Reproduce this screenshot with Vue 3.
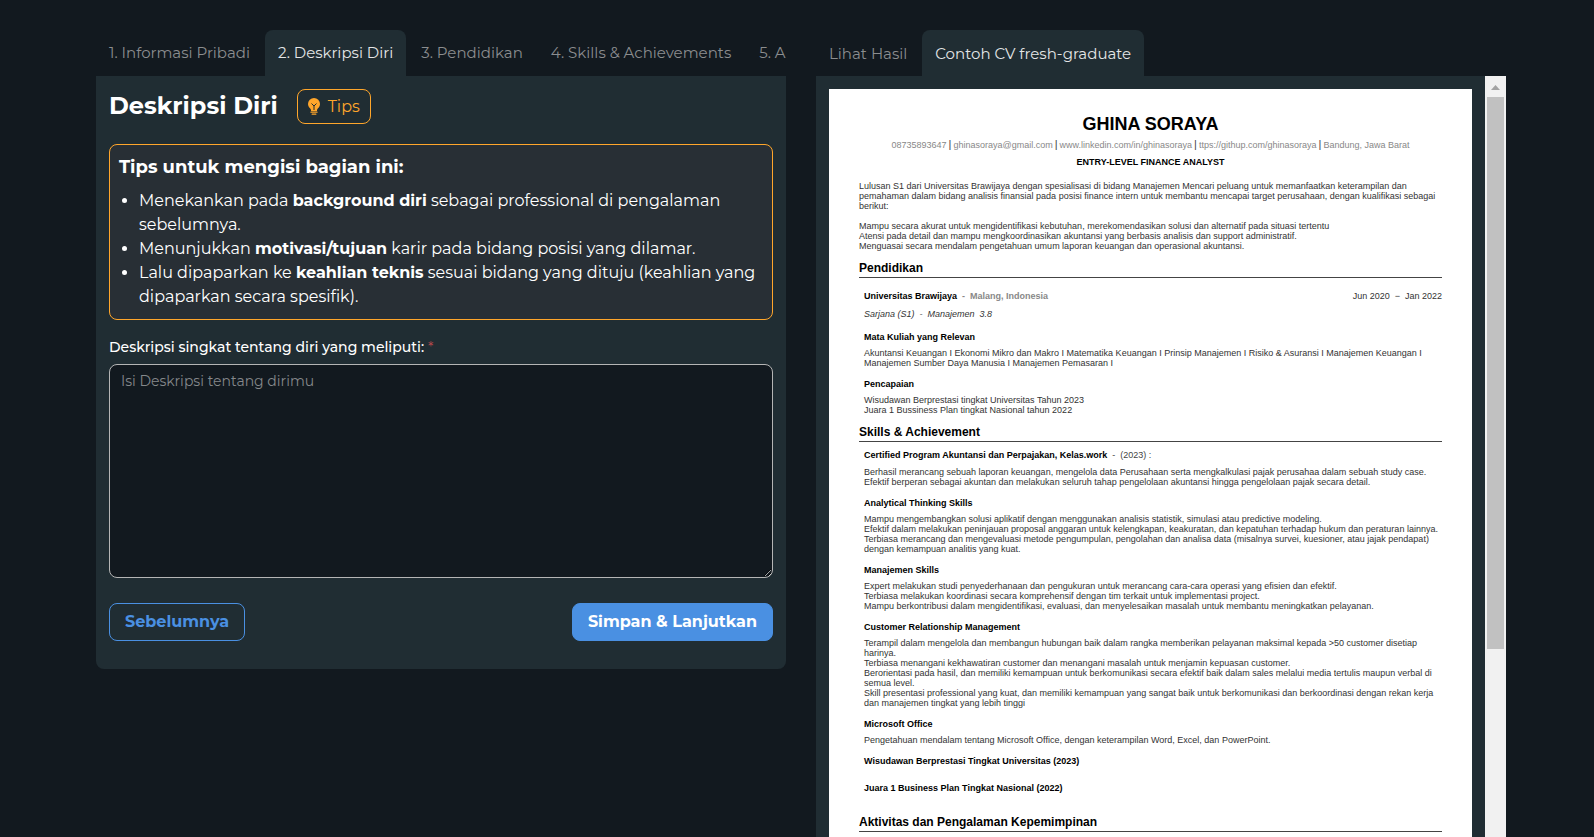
<script setup>
import { ref } from 'vue'

const description = ref('')

const steps = ['1. Informasi Pribadi', '2. Deskripsi Diri', '3. Pendidikan', '4. Skills & Achievements', '5. A']
const activeStep = ref(1)

const previews = ['Lihat Hasil', 'Contoh CV fresh-graduate']
const activePreview = ref(1)

const contacts = [
  '08735893647',
  'ghinasoraya@gmail.com',
  'www.linkedin.com/in/ghinasoraya',
  'ttps://githup.com/ghinasoraya',
  'Bandung, Jawa Barat',
]

const summary = [
  'Lulusan S1 dari Universitas Brawijaya dengan spesialisasi di bidang Manajemen Mencari peluang untuk memanfaatkan keterampilan dan',
  'pemahaman dalam bidang analisis finansial pada posisi finance intern untuk membantu mencapai target perusahaan, dengan kualifikasi sebagai',
  'berikut:',
]

const highlights = [
  'Mampu secara akurat untuk mengidentifikasi kebutuhan, merekomendasikan solusi dan alternatif pada situasi tertentu',
  'Atensi pada detail dan mampu mengkoordinasikan akuntansi yang berbasis analisis dan support administratif.',
  'Menguasai secara mendalam pengetahuan umum laporan keuangan dan operasional akuntansi.',
]

const education = [
  {
    title: 'Mata Kuliah yang Relevan',
    lines: [
      'Akuntansi Keuangan I Ekonomi Mikro dan Makro I Matematika Keuangan I Prinsip Manajemen I Risiko & Asuransi I Manajemen Keuangan I',
      'Manajemen Sumber Daya Manusia I Manajemen Pemasaran I',
    ],
  },
  {
    title: 'Pencapaian',
    lines: ['Wisudawan Berprestasi tingkat Universitas Tahun 2023', 'Juara 1 Bussiness Plan tingkat Nasional tahun 2022'],
  },
]

const skills = [
  {
    title: 'Certified Program Akuntansi dan Perpajakan, Kelas.work',
    note: '(2023) :',
    lines: [
      'Berhasil merancang sebuah laporan keuangan, mengelola data Perusahaan serta mengkalkulasi pajak perusahaa dalam sebuah study case.',
      'Efektif berperan sebagai akuntan dan melakukan seluruh tahap pengelolaan akuntansi hingga pengelolaan pajak secara detail.',
    ],
  },
  {
    title: 'Analytical Thinking Skills',
    lines: [
      'Mampu mengembangkan solusi aplikatif dengan menggunakan analisis statistik, simulasi atau predictive modeling.',
      'Efektif dalam melakukan peninjauan proposal anggaran untuk kelengkapan, keakuratan, dan kepatuhan terhadap hukum dan peraturan lainnya.',
      'Terbiasa merancang dan mengevaluasi metode pengumpulan, pengolahan dan analisa data (misalnya survei, kuesioner, atau jajak pendapat)',
      'dengan kemampuan analitis yang kuat.',
    ],
  },
  {
    title: 'Manajemen Skills',
    lines: [
      'Expert melakukan studi penyederhanaan dan pengukuran untuk merancang cara-cara operasi yang efisien dan efektif.',
      'Terbiasa melakukan koordinasi secara komprehensif dengan tim terkait untuk implementasi project.',
      'Mampu berkontribusi dalam mengidentifikasi, evaluasi, dan menyelesaikan masalah untuk membantu meningkatkan pelayanan.',
    ],
  },
  {
    title: 'Customer Relationship Management',
    lines: [
      'Terampil dalam mengelola dan membangun hubungan baik dalam rangka memberikan pelayanan maksimal kepada >50 customer disetiap',
      'harinya.',
      'Terbiasa menangani kekhawatiran customer dan menangani masalah untuk menjamin kepuasan customer.',
      'Berorientasi pada hasil, dan memiliki kemampuan untuk berkomunikasi secara efektif baik dalam sales melalui media tertulis maupun verbal di',
      'semua level.',
      'Skill presentasi professional yang kuat, dan memiliki kemampuan yang sangat baik untuk berkomunikasi dan berkoordinasi dengan rekan kerja',
      'dan manajemen tingkat yang lebih tinggi',
    ],
  },
  {
    title: 'Microsoft Office',
    lines: ['Pengetahuan mendalam tentang Microsoft Office, dengan keterampilan Word, Excel, dan PowerPoint.'],
  },
  { title: 'Wisudawan Berprestasi Tingkat Universitas (2023)', lines: [] },
  { title: 'Juara 1 Business Plan Tingkat Nasional (2022)', lines: [] },
]
</script>

<template>
  <main class="page">
    <section class="column">
      <nav class="tabs">
        <button
          v-for="(step, i) in steps"
          :key="step"
          type="button"
          class="tab"
          :class="{ active: i === activeStep }"
          @click="activeStep = i"
        >{{ step }}</button>
      </nav>

      <form class="panel form" @submit.prevent>
        <header class="form-head">
          <h1>Deskripsi Diri</h1>
          <button type="button" class="tips-button">
            <svg class="bulb" viewBox="0 0 12 17" aria-hidden="true">
              <path class="glass" d="M6 0a6 6 0 0 0-6 6c0 2 1 3.300 2 4.300.7.700 1 1.300 1 2V13h6v-.700c0-.700.3-1.300 1-2 1-1 2-2.300 2-4.300a6 6 0 0 0-6-6z" />
              <path class="filament" d="M3.500 5.500 6 8l2.500-2.500M6 8v4" />
              <path class="cap" d="M3 14.200h6M4.200 16.200h3.600" />
            </svg>
            Tips
          </button>
        </header>

        <aside class="tips">
          <h2>Tips untuk mengisi bagian ini:</h2>
          <ul>
            <li>Menekankan pada <b>background diri</b> sebagai professional di pengalaman<br />sebelumnya.</li>
            <li>Menunjukkan <b>motivasi/tujuan</b> karir pada bidang posisi yang dilamar.</li>
            <li>Lalu dipaparkan ke <b>keahlian teknis</b> sesuai bidang yang dituju (keahlian yang<br />dipaparkan secara spesifik).</li>
          </ul>
        </aside>

        <label for="description">Deskripsi singkat tentang diri yang meliputi: <span class="required">*</span></label>
        <textarea id="description" v-model="description" placeholder="Isi Deskripsi tentang dirimu"></textarea>

        <footer class="actions">
          <button type="button" class="action outline">Sebelumnya</button>
          <button type="submit" class="action solid">Simpan &amp; Lanjutkan</button>
        </footer>
      </form>
    </section>

    <section class="column">
      <nav class="tabs preview-tabs">
        <button
          v-for="(preview, i) in previews"
          :key="preview"
          type="button"
          class="tab"
          :class="{ active: i === activePreview }"
          @click="activePreview = i"
        >{{ preview }}</button>
      </nav>

      <div class="viewer">
        <div class="viewer-body">
          <article class="paper">
            <h2 class="name">GHINA SORAYA</h2>
            <p class="contacts"><template v-for="(contact, i) in contacts" :key="contact"><span v-if="i" class="bar">|</span>{{ contact }}</template></p>
            <p class="role">ENTRY-LEVEL FINANCE ANALYST</p>

            <p class="summary"><span v-for="line in summary" :key="line" class="line">{{ line }}</span></p>
            <p class="highlights"><span v-for="line in highlights" :key="line" class="line">{{ line }}</span></p>

            <section class="block education">
              <h3>Pendidikan</h3>
              <div class="school">
                <p class="entry-title">Universitas Brawijaya <span class="place">&nbsp;- &nbsp;<b>Malang, Indonesia</b></span></p>
                <p class="date">Jun 2020 &nbsp;− &nbsp;Jan 2022</p>
              </div>
              <p class="degree">Sarjana (S1) &nbsp;- &nbsp;Manajemen &nbsp;3.8</p>
              <div v-for="entry in education" :key="entry.title" class="entry">
                <h4 class="entry-title">{{ entry.title }}</h4>
                <p><span v-for="line in entry.lines" :key="line" class="line">{{ line }}</span></p>
              </div>
            </section>

            <section class="block skills">
              <h3>Skills &amp; Achievement</h3>
              <div v-for="entry in skills" :key="entry.title" class="entry">
                <h4 class="entry-title">{{ entry.title }} <span v-if="entry.note" class="note">&nbsp;- &nbsp;{{ entry.note }}</span></h4>
                <p><span v-for="line in entry.lines" :key="line" class="line">{{ line }}</span></p>
              </div>
            </section>

            <section class="block">
              <h3>Aktivitas dan Pengalaman Kepemimpinan</h3>
            </section>
          </article>
        </div>
        <div class="scrollbar" aria-hidden="true">
          <svg class="arrow" viewBox="0 0 21 21"><path d="M6 14l4.500-5 4.500 5z" /></svg>
          <div class="thumb"></div>
        </div>
      </div>
    </section>
  </main>
</template>

<style>
body {
  background: #12191f;
}
</style>

<style scoped>
* {
  box-sizing: border-box;
}

h1, h2, h3, h4, p, ul {
  margin: 0;
}

.page {
  display: grid;
  grid-template-columns: minmax(0, 1fr) minmax(0, 1fr);
  gap: 30px;
  height: 100vh;
  padding: 30px 88px 0 96px;
  overflow: hidden;
  background: #12191f;
  color: #fff;
  font-family: Montserrat, Inter, sans-serif;
  font-size: 16px;
  line-height: 24px;
}

button, textarea {
  font: inherit;
}

.column {
  display: flex;
  flex-direction: column;
  min-height: 0;
}

.tabs {
  display: flex;
  flex: none;
  gap: 2px;
  overflow: hidden;
}

.tab {
  flex: none;
  height: 46px;
  padding: 0 13px;
  border: 0;
  border-radius: 8px 8px 0 0;
  background: none;
  color: #8b8d8f;
  font-size: 15px;
  white-space: nowrap;
}

.preview-tabs .tab {
  padding-top: 2px;
}

.tab.active {
  background: #202d33;
  color: #e4e6e7;
}

.panel {
  background: #202d33;
  border-radius: 0 0 8px 8px;
}

.form {
  display: flex;
  flex-direction: column;
  padding: 13px 13px 28px;
}

.form-head {
  display: flex;
  align-items: flex-start;
  gap: 19px;
}

h1 {
  font-size: 24px;
  line-height: 33px;
}

.tips-button {
  display: flex;
  align-items: center;
  gap: 8px;
  height: 35px;
  padding: 0 10px;
  border: 1px solid #ffa62b;
  border-radius: 8px;
  background: none;
  color: #ffa62b;
}

.bulb {
  width: 12px;
  height: 17px;
}

.glass {
  fill: #ffa62b;
}

.filament {
  fill: none;
  stroke: #202d33;
}

.cap {
  fill: none;
  stroke: #ffa62b;
  stroke-width: 1.3;
  stroke-linecap: round;
}

.tips {
  margin-top: 20px;
  padding: 10px 9px;
  border: 1px solid #ffa62b;
  border-radius: 8px;
  background: #282f35;
}

.tips h2 {
  font-size: 18px;
  line-height: 24px;
}

.tips ul {
  margin-top: 10px;
  padding-left: 20px;
}

label {
  margin-top: 16px;
  font-size: 14px;
  font-weight: 500;
  line-height: 22px;
}

.required {
  color: #b5484b;
  font-weight: 400;
}

textarea {
  height: 214px;
  margin-top: 6px;
  padding: 4px 11px;
  border: 1px solid #b5b5b5;
  border-radius: 8px;
  background: #12191f;
  color: #fff;
  font-size: 14px;
}

textarea::placeholder {
  color: #85888b;
}

.actions {
  display: flex;
  justify-content: space-between;
  margin-top: 25px;
}

.action {
  height: 38px;
  padding: 0 15px;
  border: 1px solid #4a90e2;
  border-radius: 8px;
  font-weight: 700;
}

.outline {
  background: none;
  color: #4a90e2;
}

.solid {
  background: #4a90e2;
  color: #fff;
}

.viewer {
  display: flex;
  flex: 1;
  min-height: 0;
  background: #202d33;
}

.viewer-body {
  flex: 1;
  min-width: 0;
  padding: 13px 13px 0;
  overflow: hidden;
}

.scrollbar {
  display: flex;
  flex: none;
  flex-direction: column;
  align-items: center;
  width: 21px;
  background: #f1f1f1;
}

.arrow {
  width: 21px;
  height: 21px;
  fill: #a3a3a3;
}

.thumb {
  width: 17px;
  height: 66vh;
  background: #c1c1c1;
}

.paper {
  min-height: 100vh;
  padding: 23px 30px;
  background: #fff;
  color: #333;
  font-family: "Liberation Sans", Arial, sans-serif;
  font-size: 9px;
  line-height: 10px;
}

.name {
  color: #000;
  font-size: 18px;
  line-height: 24px;
  text-align: center;
}

.contacts {
  margin-top: 2px;
  color: #888;
  text-align: center;
  line-height: 12px;
}

.bar {
  margin: 0 2px;
  color: #444;
  font-size: 11px;
}

.role {
  margin-top: 6px;
  color: #000;
  font-weight: 700;
  text-align: center;
}

.summary {
  margin-top: 14px;
}

.highlights {
  margin-top: 10px;
}

.line {
  display: block;
  white-space: nowrap;
}

.block {
  margin-top: 9px;
}

.block > :not(h3) {
  margin-left: 5px;
}

h3 {
  border-bottom: 1px solid #444;
  color: #000;
  font-size: 12px;
  line-height: 17px;
}

.school {
  display: flex;
  justify-content: space-between;
  margin-top: 13px;
}

.degree {
  margin-top: 8px;
  font-style: italic;
}

.entry-title {
  margin-bottom: 6px;
  color: #000;
  font-size: 9px;
  font-weight: 700;
}

.school .entry-title {
  margin-bottom: 0;
}

.place {
  color: #888;
}

.note {
  color: #444;
  font-weight: 400;
}

.entry {
  display: flex;
  flex-direction: column;
  margin-top: 11px;
}

.degree + .entry {
  margin-top: 13px;
}

.skills {
  padding-bottom: 6px;
}

.skills h3 + .entry {
  gap: 1px;
  margin-top: 8px;
}
</style>
